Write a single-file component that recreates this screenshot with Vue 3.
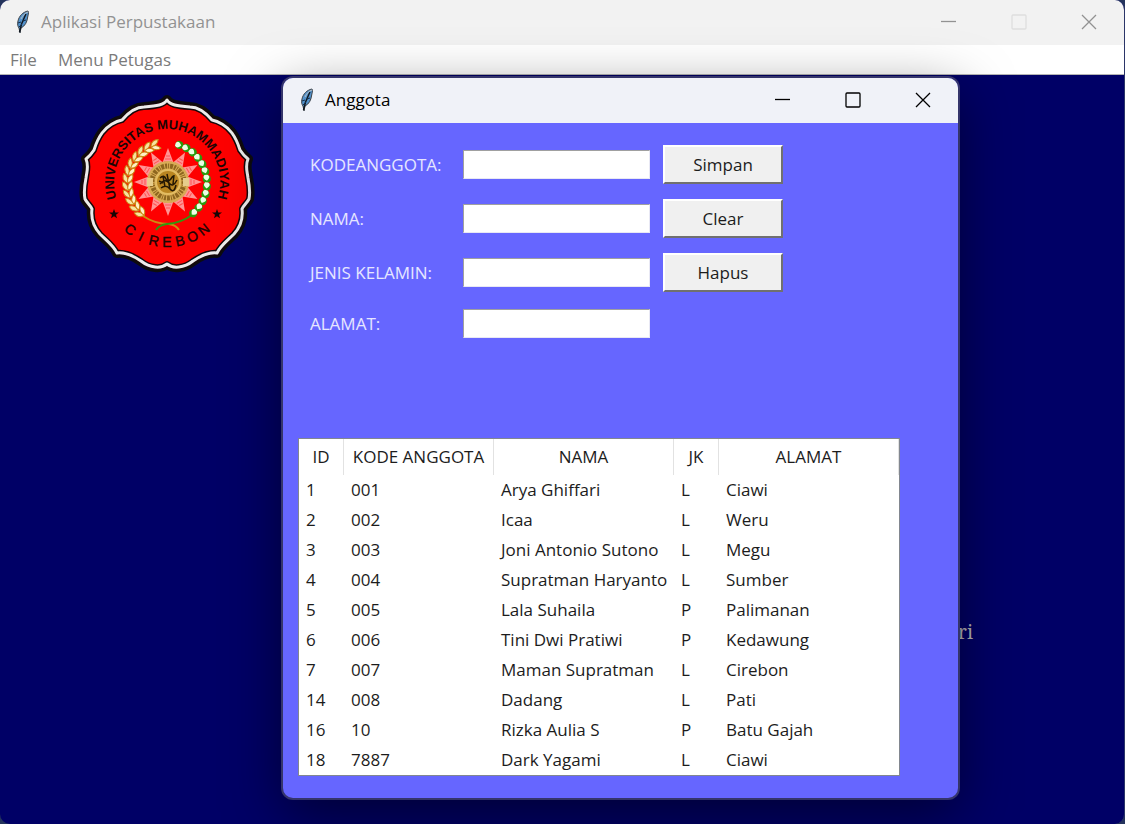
<script setup>
import { ref } from 'vue'

const fields = ref([
  { id: 'kode', label: 'KODEANGGOTA:', value: '', action: 'Simpan' },
  { id: 'nama', label: 'NAMA:', value: '', action: 'Clear' },
  { id: 'jk', label: 'JENIS KELAMIN:', value: '', action: 'Hapus' },
  { id: 'alamat', label: 'ALAMAT:', value: '', action: '' }
])

const columns = ['ID', 'KODE ANGGOTA', 'NAMA', 'JK', 'ALAMAT']

const rows = [
  ['1', '001', 'Arya Ghiffari', 'L', 'Ciawi'],
  ['2', '002', 'Icaa', 'L', 'Weru'],
  ['3', '003', 'Joni Antonio Sutono', 'L', 'Megu'],
  ['4', '004', 'Supratman Haryanto', 'L', 'Sumber'],
  ['5', '005', 'Lala Suhaila', 'P', 'Palimanan'],
  ['6', '006', 'Tini Dwi Pratiwi', 'P', 'Kedawung'],
  ['7', '007', 'Maman Supratman', 'L', 'Cirebon'],
  ['14', '008', 'Dadang', 'L', 'Pati'],
  ['16', '10', 'Rizka Aulia S', 'P', 'Batu Gajah'],
  ['18', '7887', 'Dark Yagami', 'L', 'Ciawi']
]

const sealOutline =
  'M92 10 C89 15 82 16 69 17 C60 17 53 23 47 30 C41 31 32 36 27 43 C22 50 20 57 19 60 ' +
  'C15 66 11 69 11 69 C14 76 12 80 11 88 C9 98 9 104 10 109 C12 113 16 116 17 119 ' +
  'C16 127 17 135 25 144 C33 152 38 155 42 163 C50 162 57 165 66 171 C75 178 86 179 92 174 ' +
  'C98 179 109 178 118 171 C127 165 134 162 142 163 C146 155 151 152 159 144 ' +
  'C167 135 168 127 167 119 C168 116 172 113 174 109 C175 104 175 98 173 88 ' +
  'C172 80 170 76 173 69 C173 69 169 66 165 60 C164 57 162 50 157 43 ' +
  'C152 36 143 31 137 30 C131 23 124 17 115 17 C102 16 95 15 92 10Z'

const starShape = 'M0 -5 L1.3 -1.6 L5 -1.5 L2 .8 L3 4.2 L0 2.2 L-3 4.2 L-2 .8 L-5 -1.5 L-1.3 -1.6Z'

const rays = Array.from({ length: 12 }, (_, i) => i * 30)
const leafAngles = Array.from({ length: 12 }, (_, i) => 18 + i * 11)
const cityLetters = 'CIREBON'.split('').map((ch, i) => ({ ch, offset: `${50 + (i - 3) * 7}%` }))
</script>

<template>
  <div class="desktop">
    <svg class="defs" width="0" height="0" aria-hidden="true">
      <symbol id="feather" viewBox="0 0 16 24">
        <path d="M13 1 C8 2 4 6 3 11 C2 14 3 17 4 18 L5 23 L6 18 C10 16 12 12 12.5 8 C13 5 14 3 13 1Z" fill="#5292cc" stroke="#3b4046" stroke-width="1" />
        <path d="M11 4 C9 8 6 13 4.500 22" fill="none" stroke="#111820" stroke-width="1.500" />
        <path d="M13 2 C10 3 8 5 6 9" fill="none" stroke="#b5bcc2" stroke-width="1" />
        <path d="M3 13 L6 12 M4 17 L7 14 M8 11 L11 10" stroke="#16314f" stroke-width="1" />
      </symbol>
    </svg>

    <main class="main-window">
      <header class="titlebar inactive">
        <svg class="feather"><use href="#feather" /></svg>
        <h1 class="title">Aplikasi Perpustakaan</h1>
        <button class="ctl" aria-label="Minimize"><svg viewBox="0 0 16 16"><path d="M0 7.500H15" /></svg></button>
        <button class="ctl faint" aria-label="Maximize" disabled><svg viewBox="0 0 16 16"><rect x="1" y="1" width="14" height="14" rx="1" /></svg></button>
        <button class="ctl" aria-label="Close"><svg viewBox="0 0 16 16"><path d="M1 1L15 15M15 1L1 15" /></svg></button>
      </header>
      <nav class="menubar">
        <button class="menu">File</button>
        <button class="menu">Menu Petugas</button>
      </nav>
      <section class="canvas">
        <svg class="seal" viewBox="0 0 185 190" role="img" aria-label="Universitas Muhammadiyah Cirebon">
          <defs>
            <path id="arc-top" d="M92 145 A53 53 0 0 1 92 39 A53 53 0 0 1 92 145" />
            <path id="arc-bottom" d="M27 92 A65 65 0 0 0 157 92" />
          </defs>
          <path :d="sealOutline" fill="none" stroke="#0c0c10" stroke-width="10" stroke-linejoin="round" />
          <path :d="sealOutline" fill="#fe0000" stroke="#16080a" stroke-width="6" stroke-linejoin="round" />
          <path :d="sealOutline" fill="none" stroke="#ececec" stroke-width="3" stroke-linejoin="round" />

          <text class="ring"><textPath href="#arc-top" startOffset="50%" text-anchor="middle">UNIVERSITAS MUHAMMADIYAH</textPath></text>
          <text class="ring city"><textPath v-for="l in cityLetters" :key="l.offset" href="#arc-bottom" :startOffset="l.offset" text-anchor="middle">{{ l.ch }}</textPath></text>

          <path :d="starShape" fill="#1a0505" transform="translate(39 124)" />
          <path :d="starShape" fill="#1a0505" transform="translate(142 124)" />

          <g v-for="a in rays" :key="a" :transform="`rotate(${a} 93 92)`">
            <path d="M93 58 L99 74 L87 74Z" fill="#ff9494" />
            <path d="M91 66H95M90 69H96M89 72H97" stroke="#ff5252" stroke-width="1" />
          </g>
          <circle cx="93" cy="92" r="21" fill="#d8ac55" />
          <circle cx="93" cy="92" r="16" fill="none" stroke="#8d661f" stroke-width="5" stroke-dasharray="2 1 1 1 3 1" />
          <path d="M72 88H78V96H72ZM108 88H114V96H108Z" fill="#e6cc8c" />
          <circle cx="93" cy="92" r="12" fill="#b98521" stroke="#e2bc62" stroke-width="2" />
          <path d="M85 88 Q89 84 91 89 T98 86 M85 94 Q90 88 94 93 T102 90 M86 98 Q91 94 95 99 T101 95 M92 84 L95 99 M99 85 L98 94 M88 86 L90 97 M84 91 L88 93" fill="none" stroke="#241703" stroke-width="1.500" />

          <path d="M68 126 Q80 134 94 134 Q101 135 104 140" fill="none" stroke="#cf8a12" stroke-width="2" />
          <path d="M117 125 Q106 133 92 134 Q84 135 81 140" fill="none" stroke="#2f9a10" stroke-width="2" />
          <g v-for="a in leafAngles" :key="'l' + a" :transform="`rotate(${-a} 92 93)`">
            <path d="M88 53 Q91 47 97 49 Q95 54 88 54Z" fill="#f8e3a0" stroke="#cb8714" stroke-width="1" />
            <path d="M88 54 Q94 52 97 58 Q91 60 88 54Z" fill="#fff0c4" stroke="#cb8714" stroke-width="1" />
          </g>
          <g v-for="a in leafAngles" :key="'r' + a" :transform="`rotate(${a} 92 93)`">
            <ellipse cx="92" cy="53" rx="4" ry="4" fill="#299b0c" />
            <path d="M88 52 Q90 48 94 53 Q91 58 88 55Z" fill="#edffe4" />
          </g>
        </svg>
        <span class="caption">ri</span>
      </section>
    </main>

    <section class="dialog" aria-labelledby="dialog-title">
      <header class="titlebar">
        <svg class="feather"><use href="#feather" /></svg>
        <h2 id="dialog-title" class="title">Anggota</h2>
        <button class="ctl" aria-label="Minimize"><svg viewBox="0 0 16 16"><path d="M0 7.500H15" /></svg></button>
        <button class="ctl" aria-label="Maximize"><svg viewBox="0 0 16 16"><rect x="1" y="1" width="14" height="14" rx="1" /></svg></button>
        <button class="ctl" aria-label="Close"><svg viewBox="0 0 16 16"><path d="M1 1L15 15M15 1L1 15" /></svg></button>
      </header>
      <div class="body">
        <form class="form" @submit.prevent>
          <div v-for="f in fields" :key="f.id" class="field">
            <label :for="f.id">{{ f.label }}</label>
            <input :id="f.id" v-model="f.value" type="text" />
            <button v-if="f.action" type="button" class="action">{{ f.action }}</button>
          </div>
        </form>
        <table class="grid">
          <colgroup>
            <col class="narrow" /><col class="code" /><col class="wide" /><col class="narrow" /><col class="wide" />
          </colgroup>
          <thead>
            <tr><th v-for="c in columns" :key="c" scope="col">{{ c }}</th></tr>
          </thead>
          <tbody>
            <tr v-for="r in rows" :key="r[0]">
              <td v-for="(cell, i) in r" :key="i">{{ cell }}</td>
            </tr>
          </tbody>
        </table>
      </div>
    </section>
  </div>
</template>

<style>
body {
  background: #24345c;
}
</style>

<style scoped>
.desktop {
  position: relative;
  min-height: 100vh;
  display: flex;
  overflow: hidden;
  font-family: "Open Sans", "Noto Sans", sans-serif;
  font-size: 17px;
  color: #1c1c1c;
}
.defs {
  position: absolute;
}
button,
input {
  font: inherit;
  color: inherit;
}
.main-window {
  flex: 1;
  display: flex;
  flex-direction: column;
  box-sizing: border-box;
  border-right: 1px solid #2b3568;
  border-radius: 10px;
  overflow: hidden;
  background: #000066;
}
.titlebar {
  display: flex;
  align-items: center;
  box-sizing: border-box;
  height: 45px;
  padding: 0 0 2px 15px;
  background: #f0f2f8;
  color: #000;
}
.titlebar.inactive {
  background: #f2f2f2;
  color: #929292;
}
.feather {
  width: 16px;
  height: 24px;
  margin-right: 10px;
}
.title {
  flex: 1;
  margin: 0;
  font-size: 17px;
  font-weight: 400;
}
.ctl {
  width: 70px;
  height: 43px;
  padding: 0;
  border: 0;
  background: none;
}
.ctl svg {
  display: block;
  width: 16px;
  height: 16px;
  margin: 0 auto;
  fill: none;
  stroke: currentColor;
  stroke-width: 1.3;
}
.ctl.faint {
  color: #dedede;
}
.menubar {
  display: flex;
  height: 29px;
  padding-left: 10px;
  gap: 21px;
  background: #fff;
  border-bottom: 1px solid #b4b4b4;
  color: #7a7a7a;
}
.menu {
  padding: 0;
  border: 0;
  background: none;
}
.canvas {
  position: relative;
  flex: 1;
}
.seal {
  display: block;
  width: 185px;
  height: 190px;
  margin: 15px 0 0 75px;
}
.ring {
  font-family: "Liberation Sans", Arial, sans-serif;
  font-weight: 700;
  font-size: 13px;
  fill: #1a0505;
}
.city {
  font-weight: 400;
  font-size: 14px;
  stroke: #1a0505;
  stroke-width: 0.4;
}
.caption {
  position: absolute;
  top: 545px;
  right: 151px;
  font-family: "Noto Serif", "DejaVu Serif", serif;
  font-size: 19px;
  line-height: 24px;
  color: #b9b5b8;
}
.dialog {
  position: absolute;
  top: 78px;
  left: 283px;
  width: 60%;
  border-radius: 10px;
  background: #6666ff;
  box-shadow: 0 0 0 2px #35356b, 0 16px 56px rgba(0, 0, 0, 0.5);
}
.dialog .titlebar {
  border-radius: 10px 10px 0 0;
}
.dialog .feather {
  margin-left: 1px;
}
.body {
  padding: 22px 15px;
}
.form {
  display: flex;
  flex-direction: column;
  gap: 15px;
  padding-left: 12px;
}
.field {
  display: grid;
  grid-template-columns: 153px 200px 120px;
  align-items: center;
  height: 39px;
  color: #e6e6ff;
}
.field:last-child {
  height: 33px;
}
.field input {
  box-sizing: border-box;
  width: 187px;
  height: 29px;
  padding: 1px 4px;
  border: 1px solid;
  border-color: #a0a0a0 #e8e8f4 #e8e8f4 #a0a0a0;
  background: #fff;
  color: #1c1c1c;
}
.action {
  box-sizing: border-box;
  height: 39px;
  padding: 0;
  border: 2px solid;
  border-color: #fff #707070 #707070 #fff;
  background: #f0f0f0;
  color: #1c1c1c;
}
.grid {
  table-layout: fixed;
  width: 602px;
  margin-top: 98px;
  border-collapse: separate;
  border-spacing: 0;
  border: 1px solid #828790;
  background: #fff;
}
.narrow {
  width: 45px;
}
.code {
  width: 150px;
}
.wide {
  width: 180px;
}
.grid th,
.grid td {
  box-sizing: border-box;
  padding: 0;
  font-weight: 400;
  line-height: 24px;
  white-space: nowrap;
}
.grid th {
  height: 36px;
  border-right: 1px solid #e2e2e2;
}
.grid td {
  height: 30px;
  padding-left: 7px;
}
</style>
